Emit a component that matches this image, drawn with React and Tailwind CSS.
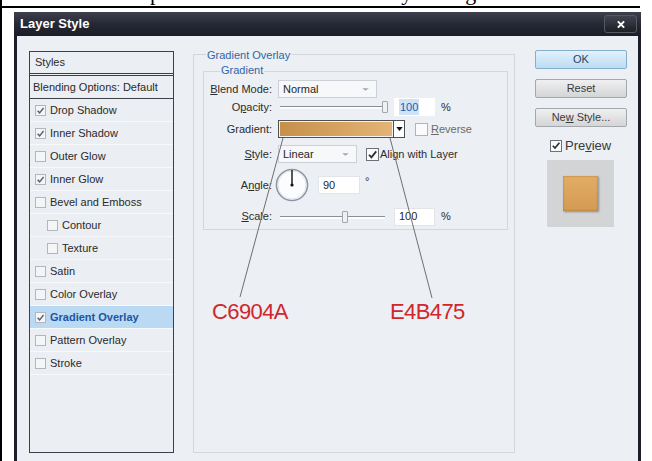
import React from 'react';

const effects = [
  { label: 'Drop Shadow', on: true },
  { label: 'Inner Shadow', on: true },
  { label: 'Outer Glow' },
  { label: 'Inner Glow', on: true },
  { label: 'Bevel and Emboss' },
  { label: 'Contour', sub: true },
  { label: 'Texture', sub: true },
  { label: 'Satin' },
  { label: 'Color Overlay' },
  { label: 'Gradient Overlay', on: true, active: true },
  { label: 'Pattern Overlay' },
  { label: 'Stroke' },
];

const Tick = ({ className = '', color = '#5a6070' }) => (
  <svg viewBox="0 0 10 10" className={className}>
    <path d="M1.8 5.2 L4 7.6 L8.4 2.2" fill="none" stroke={color} strokeWidth="1.6" />
  </svg>
);

const Check = ({ checked }) => (
  <span className="flex h-[11px] w-[11px] shrink-0 items-center justify-center border border-[#b3b7bd] bg-[#f4f5f7]">
    {checked && <Tick className="h-[9px] w-[9px]" />}
  </span>
);

const Box = ({ checked, size = 'h-[13px] w-[13px]', border = 'border-[#6d7078]' }) => (
  <span className={`flex ${size} shrink-0 items-center justify-center border ${border} bg-[#fbfbfb]`}>
    {checked && <Tick className="h-[11px] w-[11px]" color="#2b2d33" />}
  </span>
);

const Label = ({ children }) => (
  <span className="w-[69px] shrink-0 pr-[1px] text-right text-[#2c2c2c]">{children}</span>
);

const Select = ({ value, width }) => (
  <div className={`flex h-[18px] ${width} items-center justify-between border border-[#cdd1d7] bg-[#f7f8fa] pl-[4px] pr-[6px]`}>
    <span className="text-[#1f1f1f]">{value}</span>
    <svg viewBox="0 0 10 6" className="h-[5px] w-[9px]">
      <path d="M1 1.5 H9 L5 4.5 Z" fill="#a3a7ad" />
    </svg>
  </div>
);

const Slider = ({ pos }) => (
  <div className="relative ml-[2px] h-[12px] w-[105px]">
    <div className="absolute left-0 right-0 top-[5px] h-[3px] border-t border-[#8b9097] bg-[#fdfdfd]" />
    <div
      className="absolute top-0 h-[12px] w-[6px] rounded-[1px] border border-[#a2a6ac] bg-[#eef0f2]"
      style={{ left: pos }}
    />
  </div>
);

const Field = ({ children, className = '' }) => (
  <div className={`flex h-[18px] items-center border border-[#e1e4e8] bg-white pl-[4px] ${className}`}>
    {children}
  </div>
);

const Button = ({ children, primary }) => (
  <div
    className={`flex h-[19px] w-[92px] items-center justify-center rounded-[2px] border text-[11px] ${
      primary
        ? 'border-[#86aecd] bg-gradient-to-b from-[#e2f1fc] to-[#bcdcf3] text-[#2a4660]'
        : 'border-[#a4a7ab] bg-gradient-to-b from-[#f0f0f0] to-[#d4d5d7] text-[#3a3a3a]'
    }`}
  >
    <span>{children}</span>
  </div>
);

export default function App() {
  return (
    <div className="relative h-[461px] w-[652px] overflow-hidden border-l-2 border-black bg-white font-['Liberation_Sans',Arial,sans-serif] text-[11px]">
      {/* caption line above the dialog, mostly cropped */}
      <div className="h-[6px] overflow-hidden">
        <p className="-mt-[19px] pl-[120px] font-['Liberation_Serif',serif] text-[22px] leading-[24px] text-black">
          Step 4: add the Gradient Overlay setting
        </p>
      </div>
      <div className="h-[2px] w-[638px] bg-black" />

      {/* dialog window */}
      <div className="ml-[12px] mt-[4px] w-[627px] bg-[#1c1f2b]">
        <div className="flex h-[24px] items-center justify-between bg-gradient-to-b from-[#3d404d] via-[#262935] to-[#1a1c26] pl-[6px] pr-[4px]">
          <span className="text-[13px] font-bold text-white">Layer Style</span>
          <div className="flex h-[18px] w-[33px] items-center justify-center rounded-[3px] border border-[#565964] bg-gradient-to-b from-[#41444f] to-[#1d1f27]">
            <svg viewBox="0 0 10 10" className="h-[9px] w-[10px]">
              <path d="M1.5 1.5 L8.5 8.5 M8.5 1.5 L1.5 8.5" stroke="#fff" strokeWidth="2.2" />
            </svg>
          </div>
        </div>

        <div className="mx-[3px] flex h-[425px] bg-[#eceff3] pl-[12px]">
          {/* effects list */}
          <div className="mt-[15px] h-[402px] w-[145px] border border-[#3d4046] bg-[#ebeef2] text-[#2a2a2a]">
            <div className="flex h-[22px] items-center border-b border-[#3d4046] pl-[5px]">Styles</div>
            <div className="mt-[1px] flex h-[24px] items-center border-y border-[#3d4046] pl-[3px]">
              Blending Options: Default
            </div>
            {effects.map((fx) => (
              <div
                key={fx.label}
                className={`flex h-[23px] items-center gap-[4px] border-b border-[#f8f9fb] ${
                  fx.sub ? 'pl-[17px]' : 'pl-[5px]'
                } ${fx.active ? 'bg-[#bad9f2] font-bold text-[#1c55a4]' : ''}`}
              >
                <Check checked={fx.on} />
                <span>{fx.label}</span>
              </div>
            ))}
          </div>

          {/* gradient overlay settings */}
          <div className="ml-[19px] mt-[18px] h-[399px] w-[322px] border border-[#d3d7dc]">
            <div className="-mt-[6px] ml-[12px] w-fit bg-[#eceff3] px-[1px] leading-[13px] text-[#2f66a8]">
              Gradient Overlay
            </div>
            <div className="ml-[9px] mt-[9px] h-[159px] w-[305px] border border-[#d3d7dc]">
              <div className="-mt-[8px] ml-[16px] w-fit bg-[#eceff3] px-[1px] leading-[13px] text-[#2f66a8]">
                Gradient
              </div>

              <div className="mt-[3px] flex h-[18px] items-center gap-[5px]">
                <Label><span className="underline">B</span>lend Mode:</Label>
                <Select value="Normal" width="w-[99px]" />
              </div>

              <div className="flex h-[18px] items-center gap-[5px]">
                <Label>O<span className="underline">p</span>acity:</Label>
                <Slider pos={102} />
                <Field className="ml-[4px] w-[41px] border-transparent">
                  <span className="bg-[#cfe3f7] px-[1px] text-[#1d5bb0]">100</span>
                </Field>
                <span className="ml-[1px] text-[#2c2c2c]">%</span>
              </div>

              <div className="mt-[4px] flex h-[18px] items-center gap-[5px]">
                <Label>Gradient:</Label>
                <div className="flex h-[18px] items-stretch border border-[#4e5056]">
                  <div className="w-[114px] border border-[#f3f3f3] bg-gradient-to-r from-[#C6904A] to-[#E4B475]" />
                  <div className="flex w-[11px] items-center justify-center border-l border-[#4e5056] bg-white">
                    <svg viewBox="0 0 8 5" className="h-[4px] w-[7px]">
                      <path d="M0 0 H8 L4 5 Z" fill="#111" />
                    </svg>
                  </div>
                </div>
                <span className="ml-[5px]"><Box border="border-[#b0b4ba]" /></span>
                <span className="-ml-[2px] text-[#6a6a6a]"><span className="underline">R</span>everse</span>
              </div>

              <div className="mt-[7px] flex h-[18px] items-center gap-[5px]">
                <Label><span className="underline">S</span>tyle:</Label>
                <Select value="Linear" width="w-[79px]" />
                <span className="ml-[4px]"><Box checked /></span>
                <span className="-ml-[4px] text-[#2c2c2c]">Ali<span className="underline">g</span>n with Layer</span>
              </div>

              <div className="mt-[4px] flex h-[36px] items-center gap-[5px]">
                <Label>A<span className="underline">n</span>gle:</Label>
                <svg viewBox="0 0 34 34" className="-ml-[3px] h-[34px] w-[34px]">
                  <circle cx="17" cy="17" r="15.5" fill="#fbfcfd" stroke="#8d95a6" strokeWidth="1.6" />
                  <circle cx="17" cy="17" r="14" fill="none" stroke="#e0e4ea" strokeWidth="1" />
                  <path d="M17 17 V2" stroke="#111" strokeWidth="1.4" />
                  <circle cx="17" cy="17" r="1.6" fill="#111" />
                </svg>
                <Field className="ml-[4px] w-[42px]">
                  <span className="text-[#1f1f1f]">90</span>
                </Field>
                <span className="mb-[8px] text-[#2c2c2c]">°</span>
              </div>

              <div className="mt-[4px] flex h-[19px] items-center gap-[5px]">
                <Label><span className="underline">S</span>cale:</Label>
                <Slider pos={62} />
                <Field className="ml-[4px] w-[41px]">
                  <span className="text-[#1f1f1f]">100</span>
                </Field>
                <span className="ml-[1px] text-[#2c2c2c]">%</span>
              </div>
            </div>

            <div className="ml-[18px] mt-[69px] flex text-[22px] leading-[26px] tracking-[-0.6px] text-[#d0262c]">
              <span className="w-[178px]">C6904A</span>
              <span>E4B475</span>
            </div>
          </div>

          {/* dialog buttons and preview */}
          <div className="ml-[20px] mt-[14px] flex w-[92px] flex-col">
            <Button primary>OK</Button>
            <div className="mt-[10px]"><Button>Reset</Button></div>
            <div className="mt-[10px]">
              <Button>Ne<span className="underline">w</span> Style...</Button>
            </div>
            <div className="ml-[15px] mt-[12px] flex h-[13px] items-center gap-[3px]">
              <Box checked size="h-[12px] w-[12px]" />
              <span className="text-[13px] text-[#3a3a3a]">Pre<span className="underline">v</span>iew</span>
            </div>
            <div className="ml-[12px] mt-[8px] flex h-[67px] w-[67px] items-center justify-center bg-[#d3d4d5]">
              <div className="h-[35px] w-[35px] bg-gradient-to-t from-[#d29a52] to-[#e4ad66] shadow-[1px_1px_2px_rgba(0,0,0,0.35),inset_0_0_2px_rgba(120,70,20,0.6)]" />
            </div>
          </div>
        </div>
      </div>

      {/* pointer lines from the gradient stops to the colour codes */}
      <svg className="pointer-events-none absolute inset-0" width="652" height="461">
        <path d="M281 138 L238 297" stroke="#6f6f6f" strokeWidth="1" fill="none" />
        <path d="M388 138 L430 298" stroke="#6f6f6f" strokeWidth="1" fill="none" />
      </svg>
    </div>
  );
}
